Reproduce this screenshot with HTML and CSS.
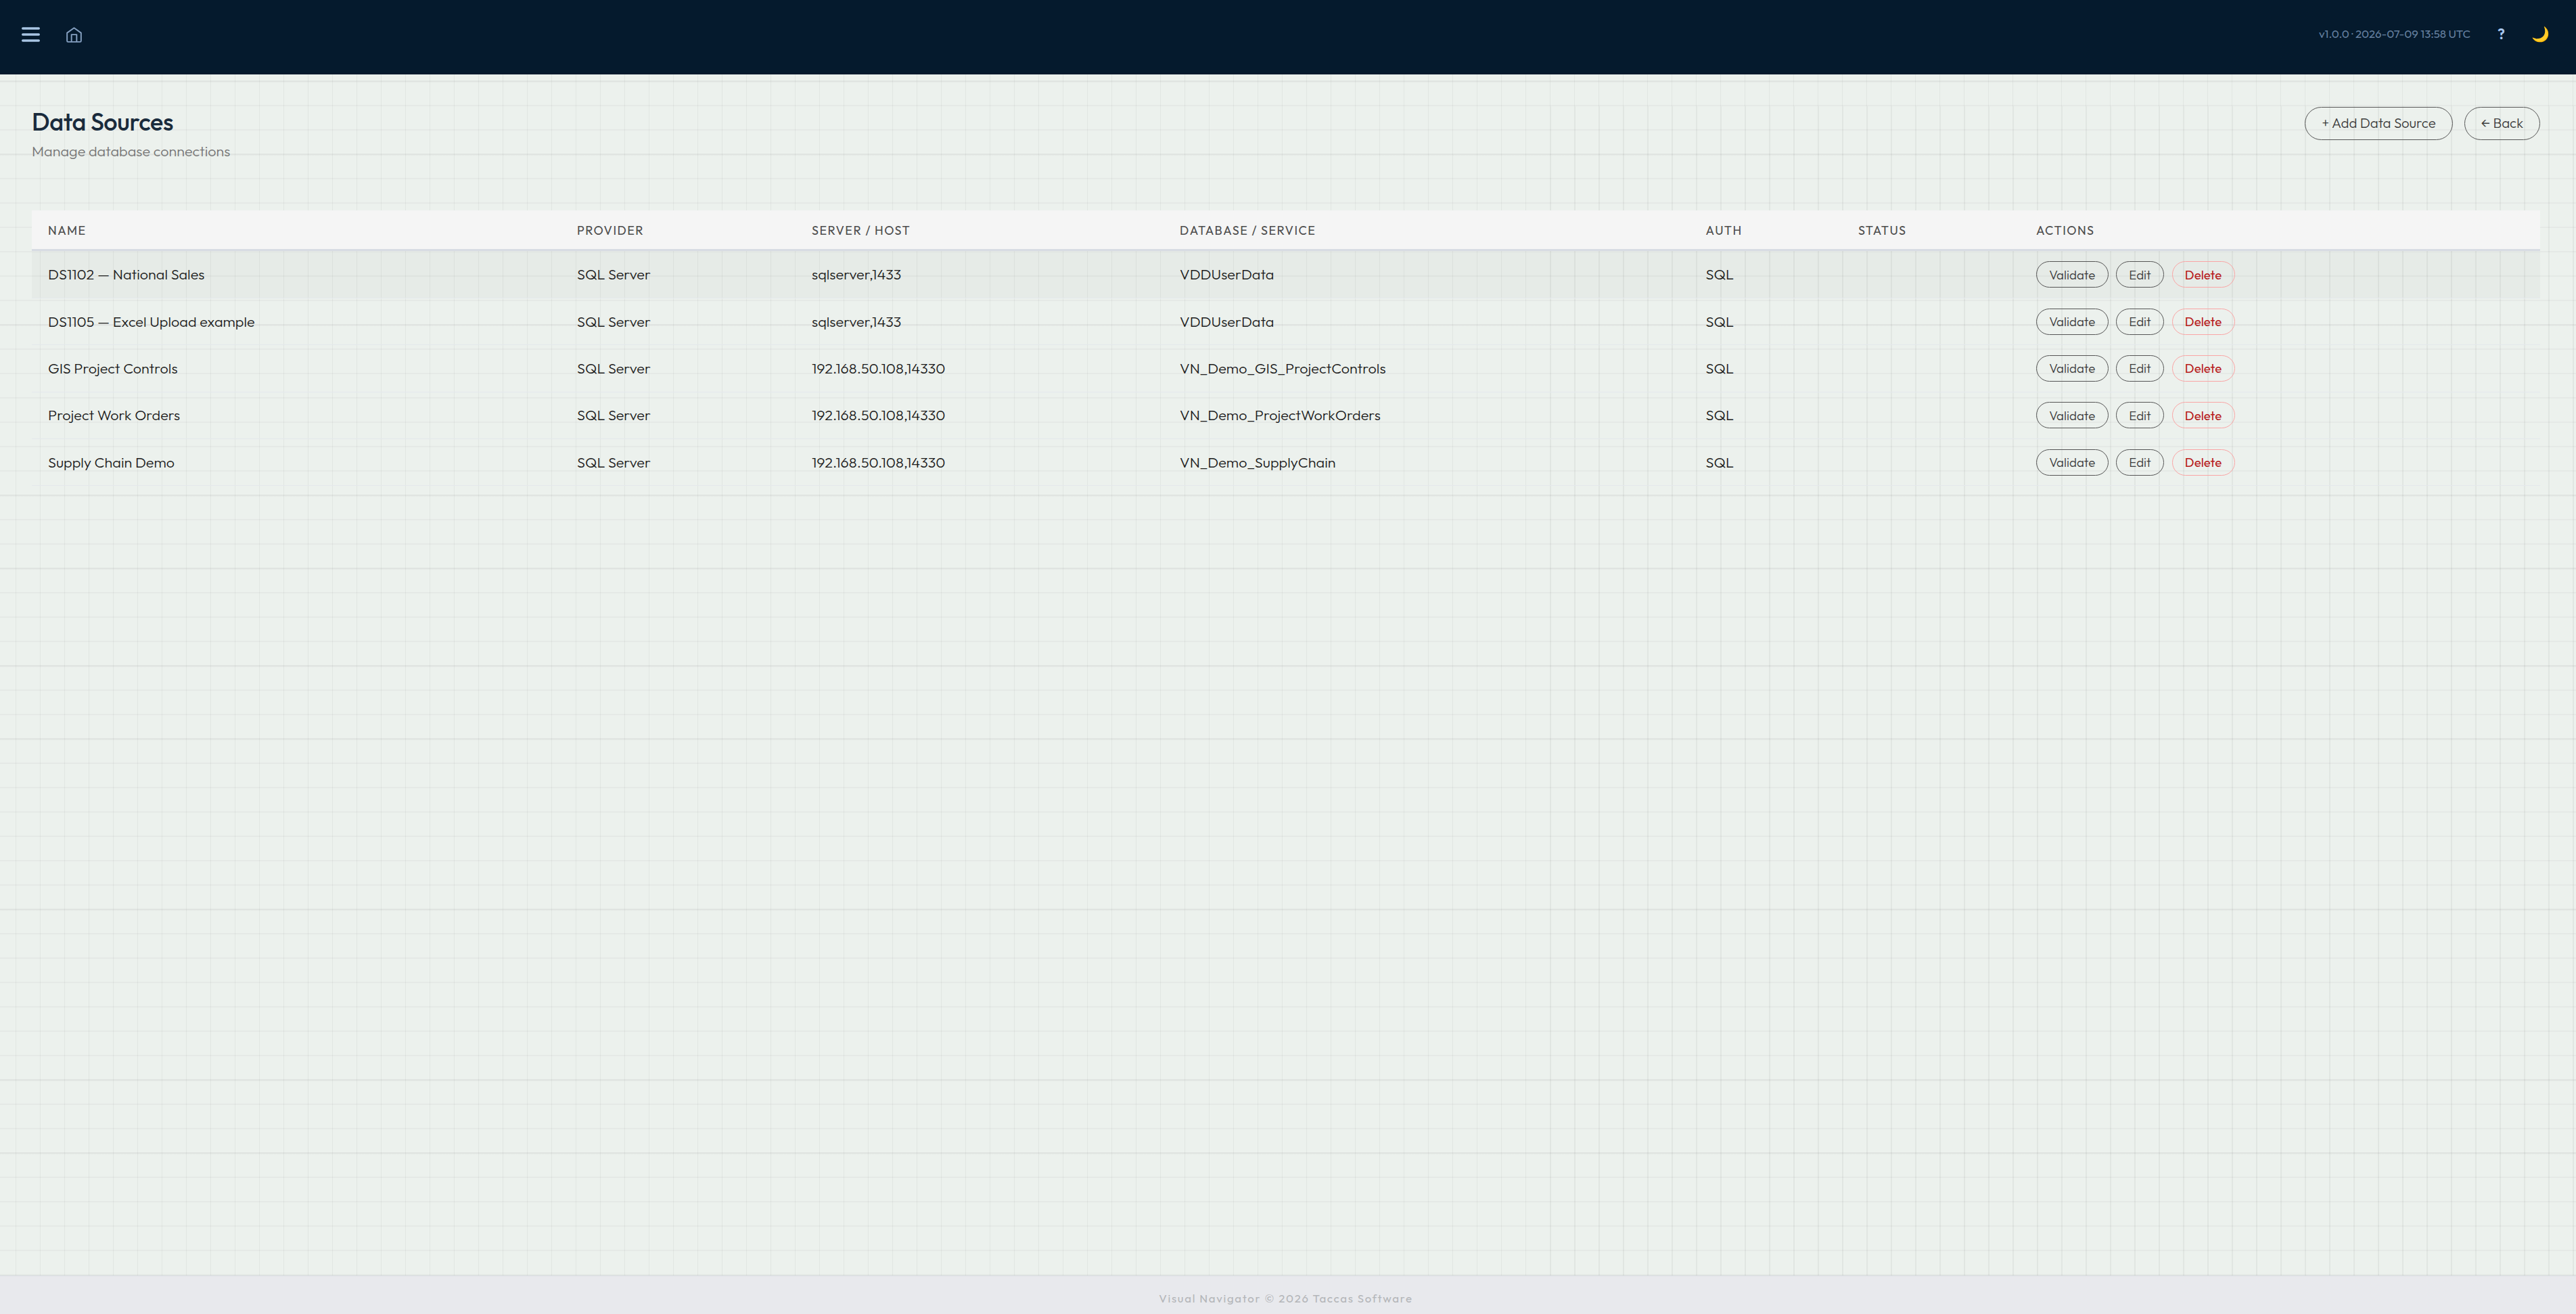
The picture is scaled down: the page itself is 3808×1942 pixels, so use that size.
FILE: index.html
```html
<!DOCTYPE html>
<html lang="en">
<head>
<meta charset="utf-8">
<title>Data Sources</title>
<link rel="stylesheet" href="styles.css">
</head>
<body>
<header class="topbar">
  <div class="topbar-left">
    <svg class="menu-icon" viewBox="0 0 27 24" fill="none" stroke="currentColor" stroke-width="3.4" stroke-linecap="round"><path d="M1.7 3h23.6M1.7 12h23.6M1.7 21h23.6"/></svg>
    <svg class="home-icon" viewBox="0 0 24 24" fill="none" stroke="currentColor" stroke-width="2" stroke-linejoin="round"><path d="M1.2 9 12 1.3 22.8 9v12.3a1.5 1.5 0 0 1-1.5 1.5H2.7a1.5 1.5 0 0 1-1.5-1.5z"/><path d="M8 22.8V11.6h8v11.2"/></svg>
  </div>
  <div class="topbar-right">
    <span class="version">v1.0.0 · 2026-07-09 13:58 UTC</span>
    <span class="help">?</span>
    <span class="moon">🌙</span>
  </div>
</header>
<main class="page">
  <div class="page-head">
    <div>
      <h1>Data Sources</h1>
      <p class="subtitle">Manage database connections</p>
    </div>
    <div class="head-actions">
      <button class="btn">+ Add Data Source</button>
      <button class="btn">← Back</button>
    </div>
  </div>
  <section class="table">
    <div class="row thead"><span>NAME</span><span>PROVIDER</span><span>SERVER / HOST</span><span>DATABASE / SERVICE</span><span>AUTH</span><span>STATUS</span><span>ACTIONS</span></div>
    <div class="row hovered"><span>DS1102 — National Sales</span><span>SQL Server</span><span>sqlserver,1433</span><span>VDDUserData</span><span>SQL</span><span></span><div class="acts"><button class="btn sm">Validate</button><button class="btn sm">Edit</button><button class="btn sm danger">Delete</button></div></div>
    <div class="row"><span>DS1105 — Excel Upload example</span><span>SQL Server</span><span>sqlserver,1433</span><span>VDDUserData</span><span>SQL</span><span></span><div class="acts"><button class="btn sm">Validate</button><button class="btn sm">Edit</button><button class="btn sm danger">Delete</button></div></div>
    <div class="row"><span>GIS Project Controls</span><span>SQL Server</span><span>192.168.50.108,14330</span><span>VN_Demo_GIS_ProjectControls</span><span>SQL</span><span></span><div class="acts"><button class="btn sm">Validate</button><button class="btn sm">Edit</button><button class="btn sm danger">Delete</button></div></div>
    <div class="row"><span>Project Work Orders</span><span>SQL Server</span><span>192.168.50.108,14330</span><span>VN_Demo_ProjectWorkOrders</span><span>SQL</span><span></span><div class="acts"><button class="btn sm">Validate</button><button class="btn sm">Edit</button><button class="btn sm danger">Delete</button></div></div>
    <div class="row"><span>Supply Chain Demo</span><span>SQL Server</span><span>192.168.50.108,14330</span><span>VN_Demo_SupplyChain</span><span>SQL</span><span></span><div class="acts"><button class="btn sm">Validate</button><button class="btn sm">Edit</button><button class="btn sm danger">Delete</button></div></div>
  </section>
</main>
<footer class="footer">Visual Navigator © 2026 Taccas Software</footer>
</body>
</html>
```
FILE: styles.css
```css
* { box-sizing: border-box; }

:root {
  --line: rgba(0, 0, 0, 0.048);
  --soft: rgba(0, 0, 0, 0.03);
  --major: linear-gradient(rgba(0, 0, 0, 0.025), rgba(0, 0, 0, 0.025));
}

/* horizontal rules every 36px, some of them heavier */
body {
  margin: 0;
  height: 1942px;
  display: flex;
  flex-direction: column;
  overflow: hidden;
  font-family: "Outfit", "Lato", sans-serif;
  font-weight: 300;
  color: #1c1c1c;
  background-color: #ecf1ed;
  background-image:
    var(--major), var(--major), var(--major), var(--major), var(--major),
    var(--major), var(--major), var(--major), var(--major), var(--major),
    linear-gradient(var(--soft) 2px, transparent 2px);
  background-repeat:
    no-repeat, no-repeat, no-repeat, no-repeat, no-repeat,
    no-repeat, no-repeat, no-repeat, no-repeat, no-repeat, repeat;
  background-size:
    100% 3px, 100% 3px, 100% 3px, 100% 3px, 100% 3px,
    100% 3px, 100% 3px, 100% 3px, 100% 3px, 100% 3px, 100% 36px;
  background-position:
    0 119px, 0 227px, 0 479px, 0 731px, 0 839px,
    0 983px, 0 1091px, 0 1343px, 0 1595px, 0 1703px, 0 11px;
}

.topbar {
  height: 110px;
  flex: none;
  display: flex;
  justify-content: space-between;
  padding: 0 39px 8px 32px;
  background: #051a2d;
}
.topbar-left, .topbar-right { display: flex; align-items: center; }
.topbar-left { gap: 39px; }
.topbar-right { padding-bottom: 3px; }
.menu-icon { width: 27px; height: 24px; color: #a9c5e3; }
.home-icon { width: 23px; height: 23px; color: #86a1c2; }
.version { font-size: 16.8px; font-weight: 400; color: #647f9e; margin-right: 40px; }
.help { width: 12px; font-size: 21.6px; font-weight: 600; color: #a9c8f2; margin-right: 38px; }
.moon { width: 27px; font-size: 21.6px; }

/* column rules: hairlines on the left and top, 2px on the right */
.page {
  flex: 1;
  padding: 47px 53px 0 47px;
  background-image:
    repeating-linear-gradient(90deg, transparent 0 23px, var(--line) 23px 24px, transparent 24px 36px),
    repeating-linear-gradient(90deg, transparent 0 11px, var(--line) 11px 12px, transparent 12px 36px),
    repeating-linear-gradient(90deg, transparent 0 11px, var(--line) 11px 13px, transparent 13px 36px);
  background-size: 2280px 100%, 1528px 47px, 1528px calc(100% - 47px);
  background-position: 0 0, 2280px 0, 2280px 47px;
  background-repeat: no-repeat;
}

.page-head { display: flex; justify-content: space-between; align-items: flex-start; height: 154px; }
h1 { margin: 0; font-size: 36px; line-height: 45px; font-weight: 500; letter-spacing: -0.36px; color: #1a2b3c; }
.subtitle { margin: 8px 0 0; font-size: 21.6px; line-height: 27px; color: #767676; }
.head-actions { display: flex; gap: 17px; padding-top: 1px; }

.btn {
  height: 49px;
  padding: 0 24px 2px;
  border: 1px solid #555;
  border-radius: 25px;
  background: transparent;
  font: 300 20.4px "Outfit", "Lato", sans-serif;
  color: #3c3c3c;
  white-space: nowrap;
}
.btn.sm { height: 39px; padding: 0 18.3px; border-radius: 20px; font-size: 18.72px; }
.btn.danger { color: #b71c1c; border-color: #faa5a5; font-weight: 400; }

.row {
  display: grid;
  grid-template-columns: 782px 347px 544px 777.5px 225.5px 263px 1fr;
  align-items: center;
  height: 69.35px;
  border-bottom: 1px solid #e4e8ec;
  font-size: 21.6px;
}
.row > * { padding-left: 24px; }
.row > span { padding-bottom: 1px; }
.thead {
  height: 60px;
  padding-top: 2px;
  margin-bottom: 0.6px;
  background: #f5f5f5;
  border-bottom: 3px solid #d8dce3;
  font-size: 18px;
  font-weight: 400;
  letter-spacing: 1.44px;
  color: #4c4c4c;
}
.hovered { background: rgba(0, 0, 0, 0.025); }
.acts { display: flex; gap: 11.5px; }

.footer {
  flex: none;
  height: 57px;
  padding: 12px 6px 0 0;
  border-top: 1px solid #d5d9de;
  background: #e8e9ed;
  text-align: center;
  font-size: 16.8px;
  font-weight: 400;
  line-height: 42px;
  letter-spacing: 1.68px;
  color: #b4b6b9;
}
```
